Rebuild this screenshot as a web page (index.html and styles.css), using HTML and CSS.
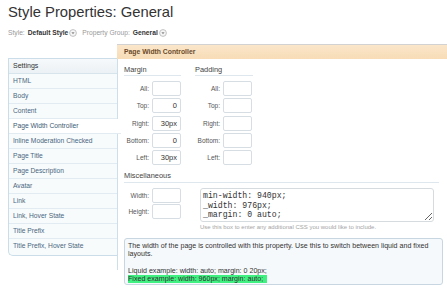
FILE: index.html
```html
<!DOCTYPE html>
<html>
<head>
	<meta charset="UTF-8">
	<link rel="stylesheet" href="styles.css">
</head>
<body>
	<h1 class="page-title">Style Properties: General</h1>
	<div class="crumbs">
		<span class="crumb">Style: <b>Default Style</b>
			<svg class="drop" width="8" height="8" viewBox="0 0 8 8"><circle cx="4" cy="4" r="3.4" fill="#f6f6f6" stroke="#b5b5b5" stroke-width="0.8"/><path d="M2.4 3.2 L5.6 3.2 L4 5.2 Z" fill="#8a8a8a"/></svg>
		</span>
		<span class="crumb">Property Group: <b>General</b>
			<svg class="drop" width="8" height="8" viewBox="0 0 8 8"><circle cx="4" cy="4" r="3.4" fill="#f6f6f6" stroke="#b5b5b5" stroke-width="0.8"/><path d="M2.4 3.2 L5.6 3.2 L4 5.2 Z" fill="#8a8a8a"/></svg>
		</span>
	</div>
	<div class="layout">
		<ul class="prop-list">
			<li class="prop-head">Settings</li>
			<li>HTML</li>
			<li>Body</li>
			<li>Content</li>
			<li class="selected">Page Width Controller</li>
			<li>Inline Moderation Checked</li>
			<li>Page Title</li>
			<li>Page Description</li>
			<li>Avatar</li>
			<li>Link</li>
			<li>Link, Hover State</li>
			<li>Title Prefix</li>
			<li>Title Prefix, Hover State</li>
		</ul>
		<div class="prop-panel">
			<div class="tab-bar"><span class="tab">Page Width Controller</span></div>
			<div class="prop-body">
				<div class="box-columns">
					<div class="box-group">
						<h3 class="group-title">Margin</h3>
						<div class="field-rows">
							<label class="field"><span>All:</span><input type="text" value=""></label>
							<label class="field"><span>Top:</span><input type="text" value="0"></label>
							<label class="field"><span>Right:</span><input type="text" value="30px"></label>
							<label class="field"><span>Bottom:</span><input type="text" value="0"></label>
							<label class="field"><span>Left:</span><input type="text" value="30px"></label>
						</div>
					</div>
					<div class="box-group">
						<h3 class="group-title">Padding</h3>
						<div class="field-rows">
							<label class="field"><span>All:</span><input type="text" value=""></label>
							<label class="field"><span>Top:</span><input type="text" value=""></label>
							<label class="field"><span>Right:</span><input type="text" value=""></label>
							<label class="field"><span>Bottom:</span><input type="text" value=""></label>
							<label class="field"><span>Left:</span><input type="text" value=""></label>
						</div>
					</div>
				</div>
				<h3 class="group-title misc-title">Miscellaneous</h3>
				<div class="misc-row">
					<div class="field-rows size-rows">
						<label class="field"><span>Width:</span><input type="text" value=""></label>
						<label class="field"><span>Height:</span><input type="text" value=""></label>
					</div>
					<div class="css-wrap">
						<textarea class="css-box">min-width: 940px;
_width: 976px;
_margin: 0 auto;</textarea>
						<p class="hint">Use this box to enter any additional CSS you would like to include.</p>
					</div>
				</div>
				<div class="description">
					The width of the page is controlled with this property. Use this to switch between liquid and fixed layouts.<br><br>
					Liquid example: width: auto; margin: 0 20px;<br>
					<span class="highlight">Fixed example: width: 960px; margin: auto;</span>
				</div>
			</div>
		</div>
	</div>
</body>
</html>
```

FILE: styles.css
```css
body {
	margin: 0;
	background: white;
	font-family: "Liberation Sans", Arial, sans-serif;
	color: #333;
}

.page-title {
	margin: 3px 0 0 8px;
	font-size: 14.8px;
	line-height: 18px;
	font-weight: normal;
	color: #333;
}

.crumbs {
	display: flex;
	gap: 5px;
	margin: 7px 0 0 8px;
	font-size: 6.7px;
	line-height: 10px;
	color: #999;
}

.crumb {
	display: flex;
	align-items: center;
	gap: 1px;
}

.crumb b {
	color: #333;
	margin-left: 2px;
}

.layout {
	display: flex;
	align-items: flex-start;
	margin-top: 6px;
	padding-left: 8px;
}

/* property list on the left */
.prop-list {
	list-style: none;
	margin: 14px 0 0 0;
	padding: 0;
	width: 108px;
	border: 1px solid #cbdde8;
	border-right: none;
	border-bottom-left-radius: 5px;
	background: #f8fbfc;
	font-size: 6.7px;
}

.prop-list li {
	height: 14px;
	line-height: 14px;
	padding-left: 4px;
	border-bottom: 1px solid #e2ebf1;
	color: #4a6780;
	white-space: nowrap;
}

.prop-list li:last-child {
	border-bottom: none;
	height: 16px;
}

.prop-list li.prop-head {
	background: linear-gradient(#f7f9fb, #ebf1f5);
	color: #333;
	font-size: 7px;
	border-bottom-color: #d7e4ec;
}

.prop-list li.selected {
	background: white;
	position: relative;
	margin-right: -4px;
	z-index: 1;
	color: #3d5a72;
}

/* right panel */
.prop-panel {
	flex: 1;
}

.tab-bar {
	height: 14px;
	border-top: 1px solid #d2d2d2;
	background: linear-gradient(#fbe6ca, #f7dcb6);
}

.tab {
	display: block;
	padding-left: 7px;
	line-height: 14px;
	font-size: 6.8px;
	font-weight: bold;
	color: #6b4a2b;
}

.prop-body {
	padding: 0 4px 0 7px;
	background: linear-gradient(#cddfea, #cddfea) left top / 1px 211px no-repeat;
}

.box-columns {
	display: flex;
	gap: 14px;
	padding-top: 6px;
}

.box-group {
	width: 57px;
}

.box-group + .box-group {
	width: 58px;
}

.group-title {
	margin: 0;
	font-size: 7.4px;
	line-height: 9px;
	font-weight: normal;
	color: #444;
	padding-bottom: 1px;
	border-bottom: 1px solid #dfe7ee;
}

.field-rows {
	display: flex;
	flex-direction: column;
	gap: 2.3px;
	margin-top: 5px;
}

.field {
	display: flex;
	align-items: center;
	justify-content: flex-end;
	gap: 3px;
	font-size: 6.5px;
	color: #555;
}

.box-group + .box-group .field {
	padding-right: 1px;
}

.field input {
	box-sizing: border-box;
	width: 29px;
	height: 15px;
	margin: 0;
	padding: 0 3px 0 0;
	border: 1px solid #d6dde3;
	border-radius: 2px;
	background: white;
	text-align: right;
	font-family: "Liberation Sans", Arial, sans-serif;
	font-size: 7.5px;
	color: #333;
	outline: none;
}

.misc-title {
	margin: 6.3px 4px 0 0;
	padding-bottom: 2px;
}

.misc-row {
	display: flex;
	align-items: flex-start;
	margin-top: 4.5px;
}

.size-rows {
	width: 57px;
	margin-top: 0;
	gap: 1.5px;
}

.css-wrap {
	margin-left: 19px;
	width: 234px;
}

.css-box {
	display: block;
	box-sizing: border-box;
	width: 234px;
	height: 34px;
	margin: 0;
	padding: 2px 2px 0 2px;
	border: 1px solid #d6dbe0;
	border-radius: 3px;
	font-family: "Liberation Mono", "Courier New", monospace;
	font-size: 8.2px;
	line-height: 9.6px;
	color: #333;
	overflow: hidden;
	outline: none;
}

.hint {
	margin: 2.5px 0 0 0;
	font-size: 6px;
	line-height: 7px;
	color: #a5a5a5;
}

.description {
	margin-top: 6.5px;
	padding: 3px 3px 1px 3px;
	border: 1px solid #c7d6e0;
	border-radius: 3px;
	background: #f6f9fb;
	font-size: 7.1px;
	line-height: 8.2px;
	color: #333;
}

.highlight {
	background: #40f080;
	padding: 0 4px 0 0;
}
```
